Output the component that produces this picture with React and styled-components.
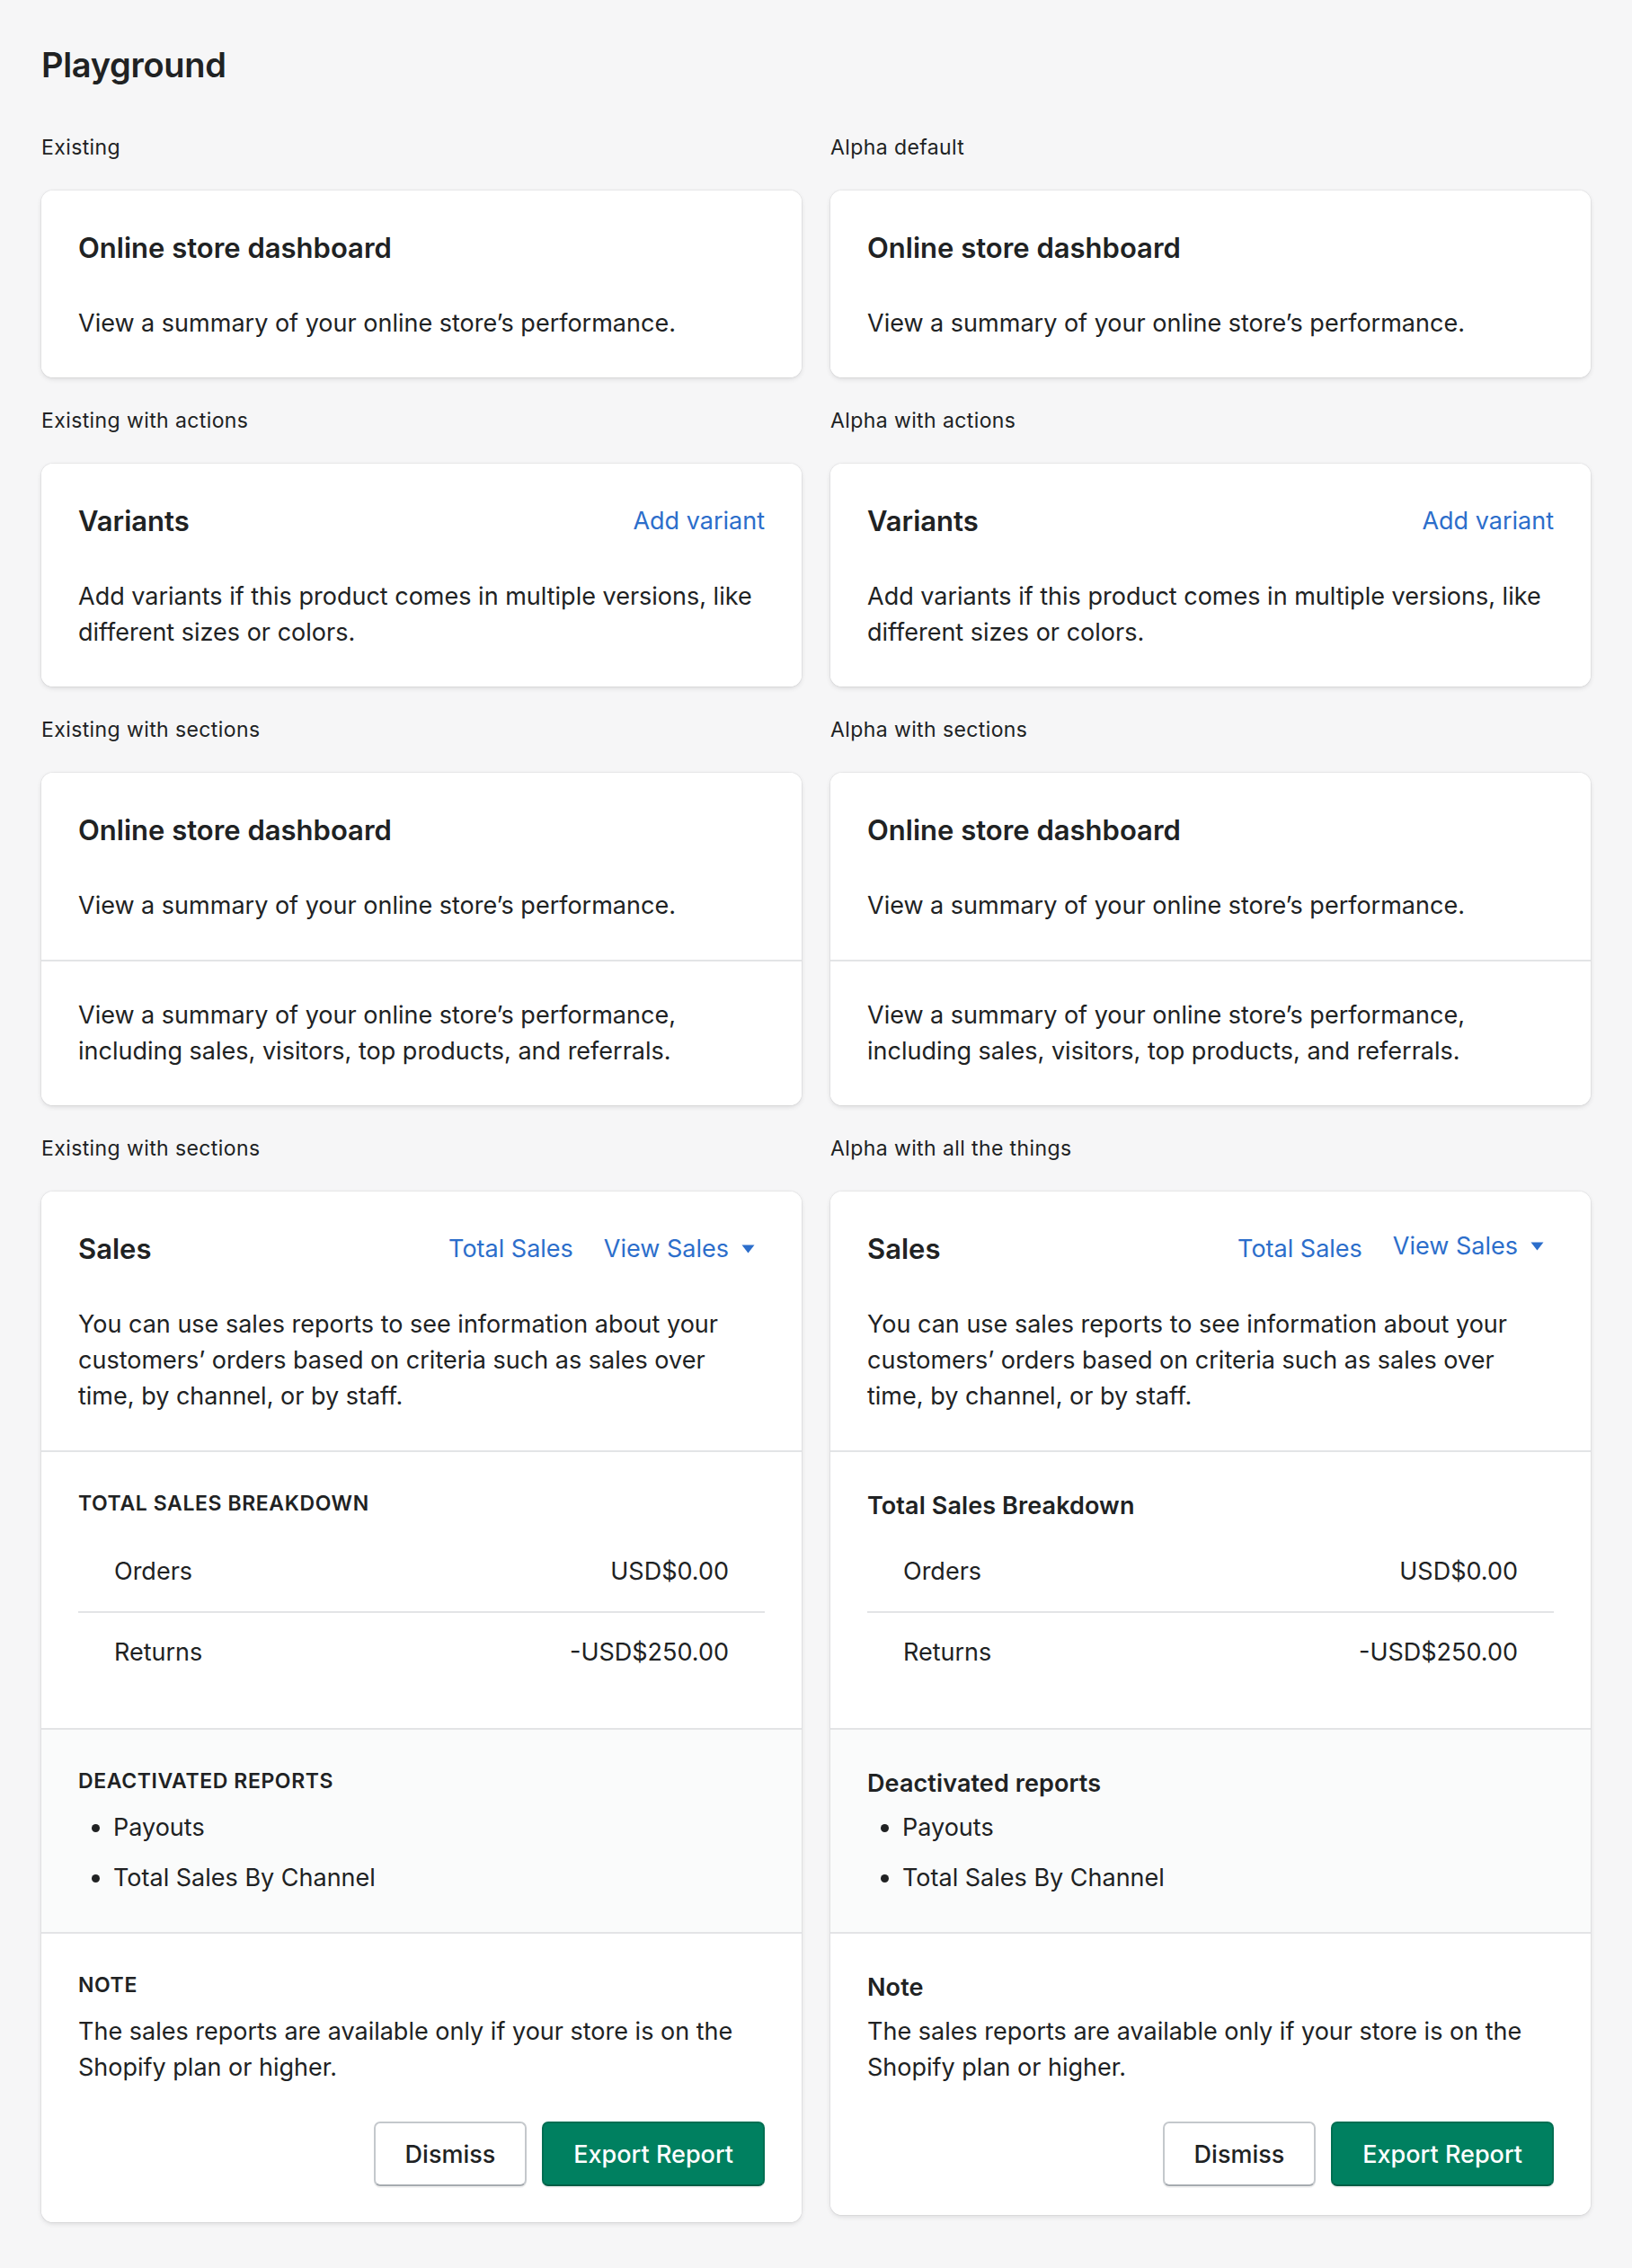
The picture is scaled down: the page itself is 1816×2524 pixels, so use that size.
import React from "react";
import styled, { createGlobalStyle } from "styled-components";

const GlobalStyle = createGlobalStyle`
  html, body {
    margin: 0;
    padding: 0;
    background: #f6f6f7;
  }
  body {
    font-family: Inter, "Noto Sans", sans-serif;
    color: #202223;
    -webkit-font-smoothing: antialiased;
  }
  * {
    box-sizing: border-box;
  }
`;

const Page = styled.main`
  padding: 48px 46px 54px;
  min-height: 2524px;
`;

const PageTitle = styled.h1`
  margin: 0 0 52px;
  font-size: 38px;
  line-height: 48px;
  font-weight: 600;
  letter-spacing: -0.3px;
`;

const Grid = styled.div`
  display: grid;
  grid-template-columns: 1fr 1fr;
  gap: 32px;
  align-items: start;
`;

const Example = styled.section`
  display: flex;
  flex-direction: column;
  gap: 32px;
`;

const Label = styled.div`
  font-size: 23px;
  line-height: 32px;
  letter-spacing: 0.4px;
`;

const Card = styled.div`
  background: #fff;
  border-radius: 13px;
  overflow: hidden;
  box-shadow: 0 0 0 1px rgba(63, 63, 68, 0.05),
    0 2px 5px 0 rgba(63, 63, 68, 0.15);
`;

const Section = styled.div`
  padding: 40px 41px ${({ $tight }) => ($tight ? "32px" : "40px")};
  background: ${({ $subdued }) => ($subdued ? "#fafbfb" : "#fff")};

  & + & {
    border-top: 2px solid #e3e4e6;
  }
`;

const Header = styled.div`
  display: flex;
  align-items: center;
  justify-content: space-between;
  margin-bottom: 40px;
`;

const CardTitle = styled.h2`
  margin: 0;
  font-size: 31px;
  line-height: 48px;
  font-weight: 600;
`;

const Actions = styled.div`
  display: flex;
  align-items: center;
  gap: 34px;
`;

const LinkButton = styled.button`
  display: inline-flex;
  align-items: center;
  gap: 14px;
  padding: 0 ${({ $caret }) => ($caret ? "11px" : "0")} 0 0;
  border: 0;
  background: none;
  font: inherit;
  font-size: 27px;
  line-height: 40px;
  color: #2c6ecb;
  cursor: pointer;
  position: relative;
  top: ${({ $lift }) => ($lift ? "-3px" : "0")};
`;

const Text = styled.p`
  margin: 0;
  font-size: 27px;
  line-height: 40px;
`;

const SubHeading = styled.h3`
  margin: 0 0 ${({ $alpha }) => ($alpha ? "9px" : "15px")};
  line-height: ${({ $alpha }) => ($alpha ? "40px" : "34px")};
  font-weight: 600;
  font-size: ${({ $alpha }) => ($alpha ? "27px" : "23px")};
  text-transform: ${({ $alpha }) => ($alpha ? "none" : "uppercase")};
  letter-spacing: ${({ $alpha }) => ($alpha ? "0.1px" : "0.6px")};
`;

const Rows = styled.ul`
  list-style: none;
  margin: 0;
  padding: 0;
`;

const Row = styled.li`
  display: flex;
  justify-content: space-between;
  padding: 24px 40px;
  font-size: 27px;
  line-height: 40px;

  & + & {
    border-top: 2px solid #e3e4e6;
  }
`;

const Bullets = styled.ul`
  margin: 0;
  padding-left: 39px;
  display: flex;
  flex-direction: column;
  gap: 16px;
`;

const Bullet = styled.li`
  font-size: 27px;
  line-height: 40px;
`;

const Footer = styled.div`
  display: flex;
  justify-content: flex-end;
  gap: 17px;
  margin-top: 40px;
`;

const Button = styled.button`
  height: 72px;
  padding: 0 33px;
  border-radius: 7px;
  font: inherit;
  font-size: 27px;
  font-weight: 500;
  cursor: pointer;
  border: 2px solid ${({ $primary }) => ($primary ? "#006e52" : "#c4c8cc")};
  border-bottom-color: ${({ $primary }) => ($primary ? "#005e46" : "#a6abb0")};
  background: ${({ $primary }) => ($primary ? "#008060" : "#fff")};
  color: ${({ $primary }) => ($primary ? "#fff" : "#202223")};
  box-shadow: 0 2px 0 rgba(0, 0, 0, 0.05);
`;

const Caret = () => (
  <svg width="15" height="10" viewBox="0 0 15 10" aria-hidden="true">
    <path d="M0.5 0.5h14L7.5 9.5z" fill="#2c6ecb" />
  </svg>
);

const summary = "View a summary of your online store\u2019s performance.";
const summaryLong =
  "View a summary of your online store\u2019s performance, including sales, visitors, top products, and referrals.";
const salesIntro =
  "You can use sales reports to see information about your customers\u2019 orders based on criteria such as sales over time, by channel, or by staff.";

const SimpleCard = () => (
  <Card>
    <Section>
      <Header>
        <CardTitle>Online store dashboard</CardTitle>
      </Header>
      <Text>{summary}</Text>
    </Section>
  </Card>
);

const ActionsCard = () => (
  <Card>
    <Section>
      <Header>
        <CardTitle>Variants</CardTitle>
        <LinkButton>Add variant</LinkButton>
      </Header>
      <Text>
        Add variants if this product comes in multiple versions, like
        different sizes or colors.
      </Text>
    </Section>
  </Card>
);

const SectionsCard = () => (
  <Card>
    <Section>
      <Header>
        <CardTitle>Online store dashboard</CardTitle>
      </Header>
      <Text>{summary}</Text>
    </Section>
    <Section>
      <Text>{summaryLong}</Text>
    </Section>
  </Card>
);

const SalesCard = ({ alpha }) => (
  <Card>
    <Section>
      <Header>
        <CardTitle>Sales</CardTitle>
        <Actions>
          <LinkButton>Total Sales</LinkButton>
          <LinkButton $caret $lift={alpha}>
            View Sales
            <Caret />
          </LinkButton>
        </Actions>
      </Header>
      <Text>{salesIntro}</Text>
    </Section>
    <Section>
      <SubHeading $alpha={alpha}>Total Sales Breakdown</SubHeading>
      <Rows>
        <Row>
          <span>Orders</span>
          <span>USD$0.00</span>
        </Row>
        <Row>
          <span>Returns</span>
          <span>-USD$250.00</span>
        </Row>
      </Rows>
    </Section>
    <Section $subdued>
      <SubHeading $alpha={alpha}>Deactivated reports</SubHeading>
      <Bullets>
        <Bullet>Payouts</Bullet>
        <Bullet>Total Sales By Channel</Bullet>
      </Bullets>
    </Section>
    <Section $tight={alpha}>
      <SubHeading $alpha={alpha}>Note</SubHeading>
      <Text>
        The sales reports are available only if your store is on the Shopify
        plan or higher.
      </Text>
      <Footer>
        <Button>Dismiss</Button>
        <Button $primary>Export Report</Button>
      </Footer>
    </Section>
  </Card>
);

const examples = [
  ["Existing", <SimpleCard />],
  ["Alpha default", <SimpleCard />],
  ["Existing with actions", <ActionsCard />],
  ["Alpha with actions", <ActionsCard />],
  ["Existing with sections", <SectionsCard />],
  ["Alpha with sections", <SectionsCard />],
  ["Existing with sections", <SalesCard />],
  ["Alpha with all the things", <SalesCard alpha />],
];

const App = () => (
  <>
    <GlobalStyle />
    <Page>
      <PageTitle>Playground</PageTitle>
      <Grid>
        {examples.map(([label, card], i) => (
          <Example key={i}>
            <Label>{label}</Label>
            {card}
          </Example>
        ))}
      </Grid>
    </Page>
  </>
);

export default App;
